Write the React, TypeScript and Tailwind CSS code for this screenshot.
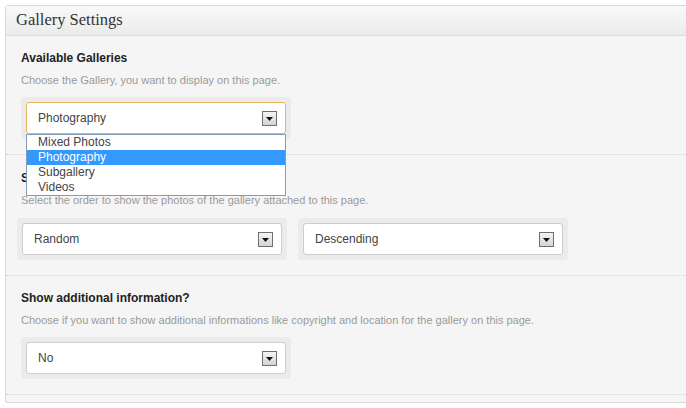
import React from "react"

const Arrow = () => (
  <span className="flex h-[15px] w-[15px] items-center justify-center border border-[#6f6f6f] bg-gradient-to-b from-[#f4f4f4] to-[#d4d4d4]">
    <svg width="7" height="4" viewBox="0 0 7 4" className="mt-[1px]">
      <path d="M0 0h7L3.5 4z" fill="#111" />
    </svg>
  </span>
)

const Select = ({ value, focused = false, children }: { value: string; focused?: boolean; children?: React.ReactNode }) => (
  <div className="rounded-[4px] bg-[#ebebeb] p-[5px]">
    <div className="relative">
      <div
        className={`flex h-[32px] w-[260px] items-center justify-between rounded-[3px] border bg-white pl-[11px] pr-[8px] text-[12px] text-[#444] ${
          focused ? "border-[#e5b45c]" : "border-[#cdcdcd]"
        }`}
      >
        <span>{value}</span>
        <Arrow />
      </div>
      {children}
    </div>
  </div>
)

const galleries = ["Mixed Photos", "Photography", "Subgallery", "Videos"]

const Section = ({
  title,
  desc,
  pt,
  gap,
  children,
}: {
  title: string
  desc: string
  pt: string
  gap: string
  children: React.ReactNode
}) => (
  <div className={`border-b border-dotted border-[#d2d2d2] pb-[15px] ${pt}`}>
    <h3 className="pl-[15px] text-[12px] font-bold leading-[15px] text-[#222]">{title}</h3>
    <p className="mt-[7px] pl-[15px] text-[11px] leading-[14px] text-[#9a9a9a]">{desc}</p>
    <div className={gap}>{children}</div>
  </div>
)

export default function App() {
  return (
    <div className="h-[408px] w-[686px] overflow-hidden bg-white pl-[5px] pt-[5px] font-['Liberation_Sans',Arial,sans-serif]">
      <div className="h-[398px] rounded-l-[3px] border border-r-0 border-[#dadada] bg-[#f5f5f5]">
        <div className="flex h-[30px] items-center border-b border-[#dcdcdc] bg-gradient-to-b from-[#f9f9f9] to-[#ebebeb] pl-[10px]">
          <h2 className="font-['Liberation_Serif',Georgia,serif] text-[16.5px] text-[#333]">Gallery Settings</h2>
        </div>

        <div className="relative z-10">
          <Section pt="pt-[15px]" gap="mt-[10px]" title="Available Galleries" desc="Choose the Gallery, you want to display on this page.">
            <div className="pl-[15px]">
              <div className="inline-block">
                <Select value="Photography" focused>
                  <ul className="absolute left-0 top-[32px] w-[260px] border border-[#7f9db9] bg-white text-[12px] leading-[15px] text-[#444]">
                    {galleries.map((g) => (
                      <li
                        key={g}
                        className={`pl-[11px] ${g === "Photography" ? "bg-[#3399ff] text-white" : ""}`}
                      >
                        {g}
                      </li>
                    ))}
                  </ul>
                </Select>
              </div>
            </div>
          </Section>
        </div>

        <Section pt="pt-[16px]" gap="mt-[11px]" title="Sort order" desc="Select the order to show the photos of the gallery attached to this page.">
          <div className="flex gap-[11px] pl-[11px]">
            <Select value="Random" />
            <Select value="Descending" />
          </div>
        </Section>

        <Section
          pt="pt-[15px]"
          gap="mt-[10px]"
          title="Show additional information?"
          desc="Choose if you want to show additional informations like copyright and location for the gallery on this page."
        >
          <div className="pl-[15px]">
            <div className="inline-block">
              <Select value="No" />
            </div>
          </div>
        </Section>
      </div>
    </div>
  )
}
